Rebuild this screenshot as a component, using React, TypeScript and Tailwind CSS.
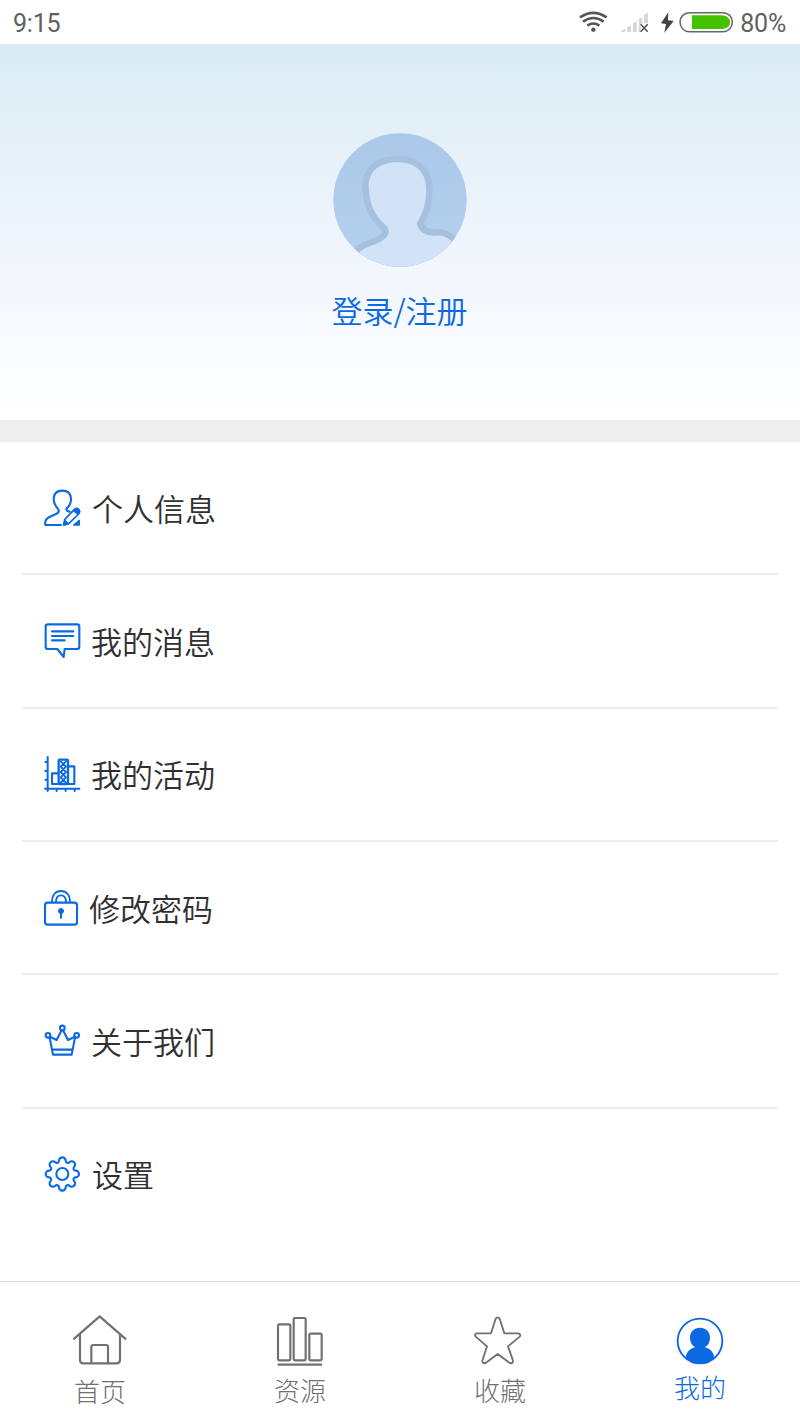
import type { ReactNode } from "react";

function StatusBar() {
  return (
    <div className="flex h-11 items-center justify-between pl-[13px] pr-[14px] pt-[3px] text-[25px] tracking-[-0.2px] text-[#606060]">
      <span className="font-['Roboto',sans-serif] leading-[41px]">9:15</span>
      <div className="flex items-center">
        <svg className="-mt-[3px] h-11 w-[180px]" viewBox="54 0 540 132" fill="none">
          <g stroke="#555" strokeWidth="8">
            <path d="M60 52Q100 25 140 52" />
            <path d="M69 65Q100 43 131 65" />
            <path d="M82 77Q100 64 118 77" />
          </g>
          <circle cx="100" cy="89" r="6.5" fill="#555" />
          <g fill="#d6d6d6">
            <path d="M184 96v-4l12-5v9zM202 96V81l11-4v19zM219 96V69l11-5v32zM236 76V57l11-6v19zM252 70V44l12-6v32z" />
            <path d="M236 76h6v20h-6z" />
          </g>
          <path d="M242 73l21 22m0-22l-21 22" stroke="#4d4d4d" strokeWidth="4.5" />
          <path d="M325 37L303 70l15 2-5 26 28-35-17-2z" fill="#444" />
          <rect x="360" y="38" width="157" height="57" rx="28" stroke="#666" strokeWidth="4.5" fill="#fff" />
          <path d="M396 46h91q23 3 23 21t-23 20h-91z" fill="#43c300" />
        </svg>
        <span className="-ml-[18px] font-['Roboto',sans-serif] leading-[41px]">80%</span>
      </div>
    </div>
  );
}

function Avatar() {
  const body =
    "M90 440L120 395C142 377 164 376 186 363C207 350 212 333 200 318C158 282 148 245 146 200C146 148 185 127 233 127C284 127 316 155 318 200C320 245 310 279 290 310C297 340 318 346 342 348C370 342 385 356 397 365L460 410V460H90Z";
  return (
    <svg className="h-[134px] w-[134px]" viewBox="39 39 402 402">
      <defs>
        <clipPath id="avatar">
          <circle cx="240" cy="240" r="200" />
        </clipPath>
        <linearGradient id="disc" x1="0" y1="0" x2="0" y2="1">
          <stop offset="0" stopColor="#abc8e9" />
          <stop offset="1" stopColor="#b4d1ef" />
        </linearGradient>
      </defs>
      <g clipPath="url(#avatar)">
        <rect x="39" y="39" width="402" height="402" fill="url(#disc)" />
        <path d={body} fill="#a6c1e0" stroke="#a6c1e0" strokeWidth="39" strokeLinejoin="round" />
        <path d={body} fill="#d3e3f7" />
      </g>
    </svg>
  );
}

function MenuIcon({ viewBox, children }: { viewBox: string; children: ReactNode }) {
  return (
    <svg
      className="mt-[2px] h-[38px] w-9 shrink-0 overflow-visible"
      viewBox={viewBox}
      fill="none"
      stroke="#0b69e2"
      strokeWidth="6.3"
      strokeLinejoin="round"
      strokeLinecap="round"
    >
      {children}
    </svg>
  );
}

/* Eight rounded teeth joined by concave arcs around (cx, cy). */
function gearPath(cx: number, cy: number) {
  const point = (turn: number, side: number) => {
    const a = (turn * Math.PI) / 4;
    const x = cx + 40 * Math.sin(a) + side * Math.cos(a);
    const y = cy - 40 * Math.cos(a) + side * Math.sin(a);
    return `${x.toFixed(2)} ${y.toFixed(2)}`;
  };
  let d = `M${point(0, -10)}`;
  for (let i = 0; i < 8; i++) {
    d += `A10 10 0 0 1 ${point(i, 10)}A6.5 6.5 0 0 0 ${point(i + 1, -10)}`;
  }
  return d + "Z";
}

const menu = [
  {
    label: "个人信息",
    gap: "ml-[12px]",
    icon: (
      <MenuIcon viewBox="42 43 108 114">
        <path d="M93 148H46Q43 132 58 124L78 115Q89 110 85 101C77 92 71 80 71 70Q72 45 97 45Q122 45 123 70C123 82 118 92 109 99Q109 106 119 108" />
        <path d="M104 132L133 101Q141 95 147 102Q151 108 146 115L117 143L101 148Z" strokeWidth="5" />
        <path d="M129 105L144 118L150 108L141 98Z" fill="#0b69e2" strokeWidth="2" />
        <path d="M101 148L104 133L116 144Z" fill="#0b69e2" strokeWidth="3" />
        <path d="M131 148H148V134Z" fill="#0b69e2" strokeWidth="4" />
      </MenuIcon>
    ),
  },
  {
    label: "我的消息",
    gap: "ml-[11px]",
    icon: (
      <MenuIcon viewBox="42 44 108 114">
        <path d="M54 48H141Q148 48 148 55V115Q148 122 141 122H104L101 146L82 122H54Q47 122 47 115V55Q47 48 54 48Z" />
        <path d="M66 69H130M66 83H130M66 96H104" />
      </MenuIcon>
    ),
  },
  {
    label: "我的活动",
    gap: "ml-[11px]",
    icon: (
      <MenuIcon viewBox="42 47 108 114">
        <path d="M53 50V152M45 145H148M46 65H53M46 92H53M46 118H53M80 145V152M107 145V152M134 145V152" strokeWidth="6" />
        <path d="M85 99H66V131H85M115 78H133V131H115" />
        <rect x="86" y="58" width="28" height="73" rx="3" strokeWidth="7" />
        <path d="M92 63L108 79L92 95L108 111L92 127M108 63L92 79L108 95L92 111L108 127" strokeWidth="5.5" />
      </MenuIcon>
    ),
  },
  {
    label: "修改密码",
    gap: "ml-[9px]",
    icon: (
      <MenuIcon viewBox="42 43 108 114">
        <rect x="45" y="81" width="96" height="66" rx="8" />
        <path d="M66 79C66 58 77 46 93 46S120 58 120 79M78 79C78 66 84 59 93 59S108 66 108 79" strokeWidth="5.5" />
        <circle cx="93" cy="106" r="7.5" fill="#0b69e2" strokeWidth="3" />
        <path d="M93 110V126" strokeWidth="6" />
      </MenuIcon>
    ),
  },
  {
    label: "关于我们",
    gap: "ml-[11px]",
    icon: (
      <MenuIcon viewBox="42 38 108 114">
        <circle cx="97" cy="53" r="7" />
        <circle cx="54" cy="75" r="7" />
        <circle cx="140" cy="75" r="7" />
        <path d="M59 82L69 133H125L135 82M61 80L80 89L94 61M100 61L114 89L133 80M67 118H128" />
      </MenuIcon>
    ),
  },
  {
    label: "设置",
    gap: "ml-[12px]",
    icon: (
      <MenuIcon viewBox="42 47 108 114">
        <circle cx="97" cy="101" r="18" />
        <path d={gearPath(97, 101)} />
      </MenuIcon>
    ),
  },
];

function NavIcon({ viewBox, children }: { viewBox: string; children: ReactNode }) {
  return (
    <svg
      className="h-[52px] w-14"
      viewBox={viewBox}
      fill="none"
      stroke="currentColor"
      strokeWidth="6.5"
      strokeLinejoin="round"
    >
      {children}
    </svg>
  );
}

const tabs = [
  {
    label: "首页",
    style: "text-[#707070]",
    shift: "mt-[6px]",
    icon: (
      <NavIcon viewBox="66 132 168 156">
        <path d="M70 208L149 139L228 208M90 190V270Q90 280 100 280H199Q210 280 210 270V190M124 280V231Q124 225 130 225H168Q174 225 174 231V280" />
      </NavIcon>
    ),
  },
  {
    label: "资源",
    style: "text-[#707070]",
    shift: "mt-[5px]",
    icon: (
      <NavIcon viewBox="667 132 168 156">
        <rect x="685" y="163" width="37" height="108" rx="4" />
        <rect x="732" y="144" width="36" height="127" rx="4" />
        <rect x="779" y="191" width="37" height="80" rx="4" />
        <path d="M684 284H817" />
      </NavIcon>
    ),
  },
  {
    label: "收藏",
    style: "text-[#707070]",
    shift: "mt-[5px]",
    icon: (
      <NavIcon viewBox="66 132 168 156">
        <path
          d="M137 146Q143 138 149 146L163 190H205Q214 193 209 200L174 229L189 272Q189 282 179 279L143 252L107 279Q97 282 97 272L111 229L77 200Q72 192 80 190H123Z"
          strokeWidth="5.5"
        />
      </NavIcon>
    ),
  },
  {
    label: "我的",
    style: "text-[#0b69e2]",
    shift: "mt-[2px]",
    icon: (
      <NavIcon viewBox="666 131 168 156">
        <circle cx="750" cy="212" r="67" strokeWidth="5.5" />
        <path
          d="M736 231C725 225 720 215 720 202C720 183 733 172 750 172S780 183 780 202C780 215 775 225 764 231C782 235 791 246 793 263C770 285 730 285 707 263C709 246 718 235 736 231Z"
          fill="currentColor"
          stroke="none"
        />
      </NavIcon>
    ),
  },
];

export default function App() {
  return (
    <div className="flex h-[1422px] w-[800px] flex-col overflow-hidden bg-white font-['Noto_Sans_CJK_SC',sans-serif]">
      <StatusBar />
      <header className="flex h-[376px] flex-col items-center bg-linear-to-b from-[#daebf4] via-[#f1f6fd] via-[56%] to-white pt-[89px]">
        <Avatar />
        <a className="mt-[20px] -ml-px text-[31px] leading-[46px] font-[350] text-[#0b69e2]">登录/注册</a>
      </header>
      <div className="h-[22px] bg-[#eeeeee]" />
      <main className="flex-1 px-[22px]">
        {menu.map((item) => (
          <div
            key={item.label}
            className="flex h-[133.33px] items-center border-b-2 border-[#ececec] pl-[22px] last:border-transparent"
          >
            {item.icon}
            <span className={`text-[31px] leading-[46px] font-[350] text-[#303030] ${item.gap}`}>{item.label}</span>
          </div>
        ))}
      </main>
      <nav className="grid h-[141px] grid-cols-4 border-t border-[#dedede] pt-8">
        {tabs.map((tab) => (
          <div key={tab.label} className={`flex flex-col items-center ${tab.style}`}>
            {tab.icon}
            <span className={`text-[26px] leading-[38px] font-light ${tab.shift}`}>{tab.label}</span>
          </div>
        ))}
      </nav>
    </div>
  );
}
